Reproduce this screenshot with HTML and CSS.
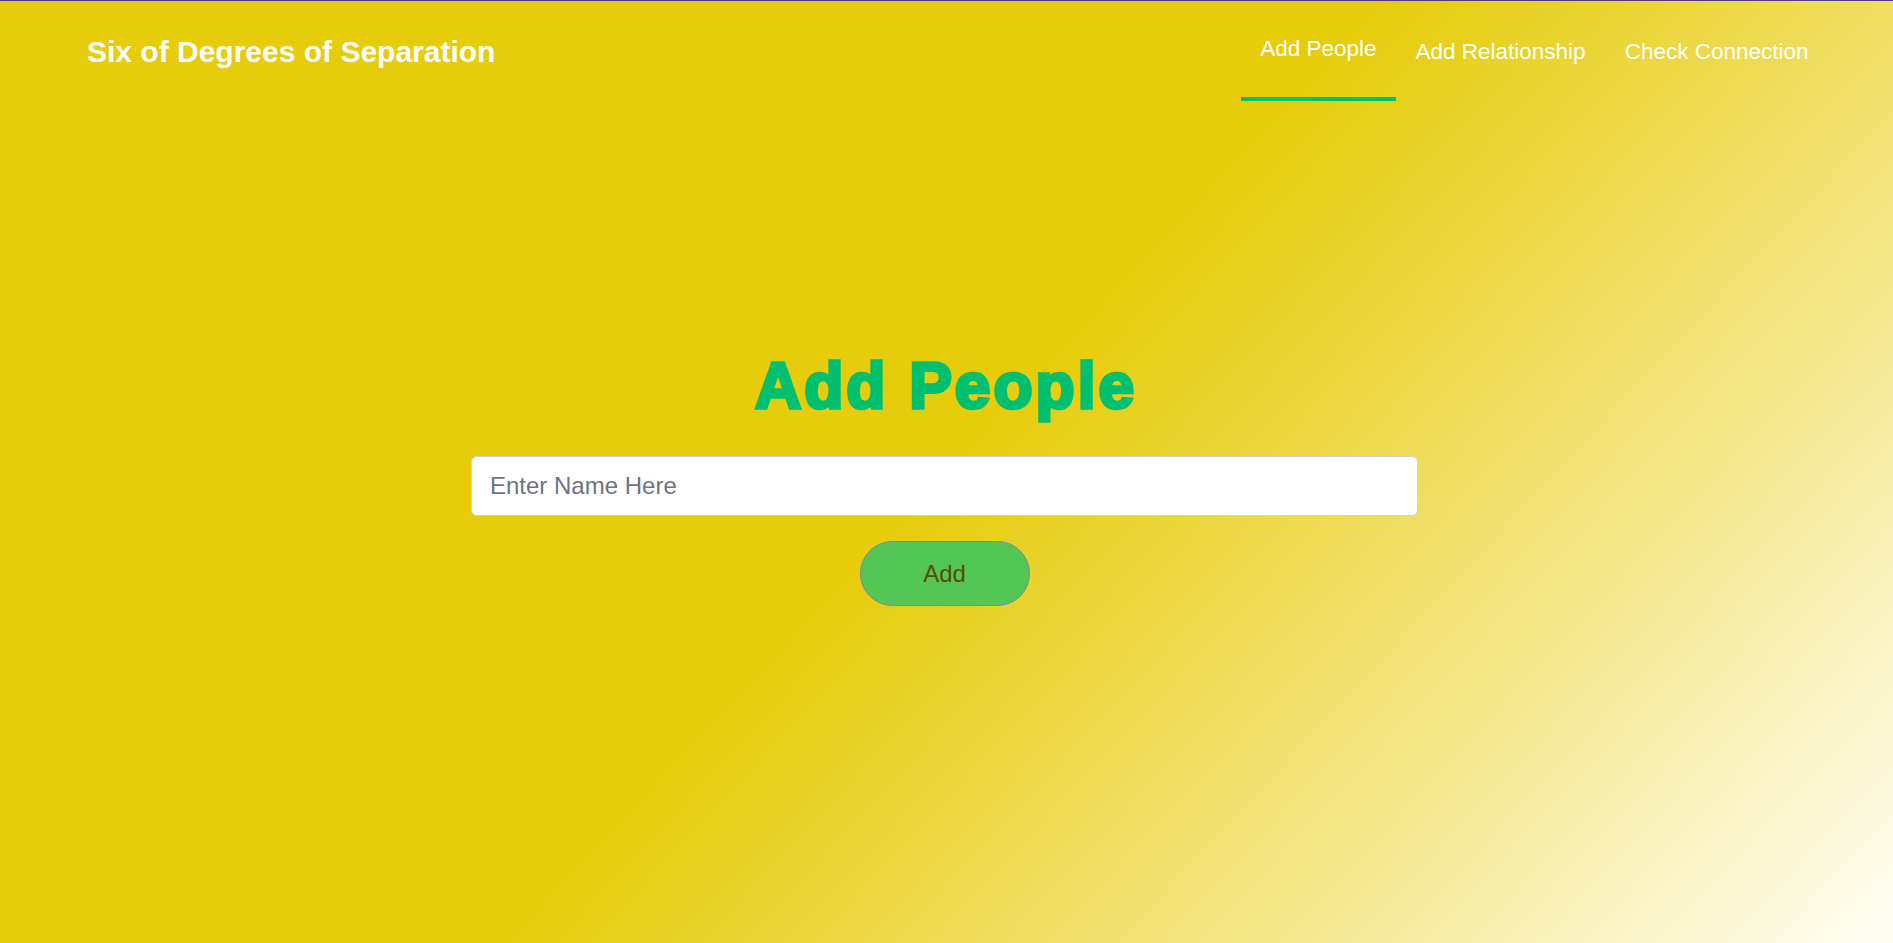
FILE: index.html
```html
<!DOCTYPE html>
<html lang="en">
<head>
<meta charset="utf-8">
<title>Six of Degrees of Separation</title>
<link rel="stylesheet" href="styles.css">
</head>
<body>
<div class="topline"></div>
<nav class="navbar">
  <a class="brand" href="#">Six of Degrees of Separation</a>
  <ul class="nav-links">
    <li><a class="nav-link active" href="#">Add People</a></li>
    <li><a class="nav-link" href="#">Add Relationship</a></li>
    <li><a class="nav-link" href="#">Check Connection</a></li>
  </ul>
</nav>
<main class="main">
  <h1 class="title">Add People</h1>
  <form class="add-form" onsubmit="return false;">
    <input class="name-input" type="text" placeholder="Enter Name Here">
    <button class="add-btn" type="submit">Add</button>
  </form>
</main>
</body>
</html>
```

FILE: styles.css
```css
* {
  box-sizing: border-box;
}

html, body {
  margin: 0;
  padding: 0;
  height: 100%;
}

body {
  font-family: "Liberation Sans", Arial, sans-serif;
  background: linear-gradient(133deg, #e6cc0b 0%, #e6cc0b 50%, #fffef6 100%);
  min-height: 943px;
  overflow: hidden;
}

.topline {
  height: 1px;
  background: #4a3e86;
}

.navbar {
  display: flex;
  align-items: center;
  justify-content: space-between;
  height: 101px;
  padding: 0 65px 0 87px;
}

.brand {
  color: #ffffff;
  font-size: 30px;
  font-weight: bold;
  text-decoration: none;
  line-height: 1.5;
}

.nav-links {
  list-style: none;
  margin: 0;
  padding: 0;
  display: flex;
  align-items: center;
  align-self: flex-start;
  height: 101px;
}

.nav-link {
  display: block;
  color: #ffffff;
  text-decoration: none;
  font-size: 22.5px;
  line-height: 33.75px;
  padding: 31.5px 19.5px;
}

.nav-link.active {
  border-bottom: 4.5px solid #00c06f;
  margin-top: -1px;
}

.main {
  display: flex;
  flex-direction: column;
  align-items: center;
  padding-top: 248px;
  padding-right: 4px;
}

.title {
  margin: 0;
  color: #00c06f;
  font-family: "Liberation Sans", Arial, sans-serif;
  font-size: 64px;
  line-height: 72px;
  font-weight: bold;
  letter-spacing: 3px;
  -webkit-text-stroke: 3.5px #00c06f;
  padding-left: 3px;
}

.add-form {
  display: flex;
  flex-direction: column;
  align-items: center;
  margin-top: 34px;
}

.name-input {
  width: 947px;
  height: 60px;
  padding: 0 18px;
  font-family: "Liberation Sans", Arial, sans-serif;
  font-size: 24px;
  color: #495057;
  background: #ffffff;
  border: 1.5px solid #ced4da;
  border-radius: 6px;
  outline: none;
}

.name-input::placeholder {
  color: #6c757d;
}

.add-btn {
  margin-top: 25px;
  width: 170px;
  height: 65px;
  font-family: "Liberation Sans", Arial, sans-serif;
  font-size: 24px;
  color: #5b4a0c;
  background: #54c653;
  border: 1px solid #6b8f9e;
  border-radius: 33px;
  cursor: pointer;
}
```
